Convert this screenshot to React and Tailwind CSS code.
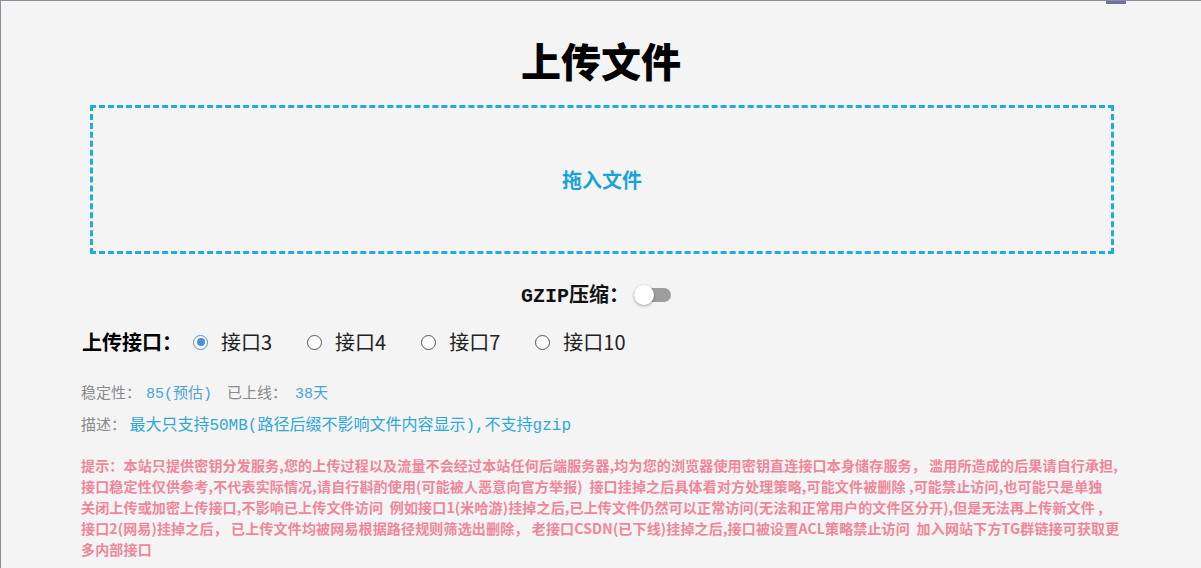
import { useState } from "react";

const cjk = '"Noto Sans CJK SC", "Noto Sans", sans-serif';
const mono = '"Liberation Mono", "Noto Sans CJK SC", monospace';

const apis = ["接口3", "接口4", "接口7", "接口10"];

const notice = [
    "提示：本站只提供密钥分发服务,您的上传过程以及流量不会经过本站任何后端服务器,均为您的浏览器使用密钥直连接口本身储存服务， 滥用所造成的后果请自行承担,",
    "接口稳定性仅供参考,不代表实际情况,请自行斟酌使用(可能被人恶意向官方举报)  接口挂掉之后具体看对方处理策略,可能文件被删除 ,可能禁止访问,也可能只是单独",
    "关闭上传或加密上传接口,不影响已上传文件访问  例如接口1(米哈游)挂掉之后,已上传文件仍然可以正常访问(无法和正常用户的文件区分开),但是无法再上传新文件 ,",
    "接口2(网易)挂掉之后， 已上传文件均被网易根据路径规则筛选出删除， 老接口CSDN(已下线)挂掉之后,接口被设置ACL策略禁止访问  加入网站下方TG群链接可获取更",
    "多内部接口",
];

function Radio({ label, checked, onClick }) {
    return (
        <button onClick={onClick} className="flex items-center gap-[13px]">
            <span
                className={
                    "w-[15px] h-[15px] rounded-full border-[1.5px] flex items-center justify-center bg-white " +
                    (checked ? "border-[#4a90d9]" : "border-[#555]")
                }
            >
                {checked && <span className="w-[8px] h-[8px] rounded-full bg-[#4a90d9]" />}
            </span>
            <span className="text-[20px] text-[#222]">{label}</span>
        </button>
    );
}

export default function App() {
    const [api, setApi] = useState(0);
    const [gzip, setGzip] = useState(false);

    return (
        <div
            className="relative min-h-[568px] bg-[#f4f4f4] border-t border-l border-[#8a8f99] px-[80px] pt-[35px]"
            style={{ fontFamily: cjk }}
        >
            <div className="absolute top-0 left-[1105px] w-[20px] h-[3px] bg-[#6f6fa0]" />

            <h1 className="text-center text-[40px] leading-[48px] font-black text-black">
                上传文件
            </h1>

            <div className="mt-[21px] ml-[9px] mr-[7px] h-[149px] border-[3px] border-dashed border-[#1fadd9] flex items-center justify-center">
                <span className="text-[20px] font-bold text-[#1aa3d6]">拖入文件</span>
            </div>

            <div className="mt-[29px] h-[24px] flex items-center justify-center gap-[5px] pr-[10px]">
                <span className="text-[20px] font-bold text-[#111]">
                    <span style={{ fontFamily: mono }}>GZIP</span>压缩：
                </span>
                <button
                    onClick={() => setGzip(!gzip)}
                    className="relative w-[37px] h-[14px] rounded-full bg-[#9e9e9e]"
                >
                    <span
                        className={
                            "absolute top-[-3px] w-[20px] h-[20px] rounded-full bg-white shadow-[0_1px_3px_rgba(0,0,0,0.35)] " +
                            (gzip ? "left-[17px]" : "left-0")
                        }
                    />
                </button>
            </div>

            <div className="mt-[21px] h-[28px] flex items-center">
                <span className="text-[20px] font-bold text-black mr-[11px] ml-[1px]">上传接口：</span>
                <div className="flex items-center gap-[35px]">
                    {apis.map((a, i) => (
                        <Radio key={a} label={a} checked={api === i} onClick={() => setApi(i)} />
                    ))}
                </div>
            </div>

            <div className="mt-[26px] h-[20px] flex items-baseline text-[15px] leading-[20px] text-[#8a8a8a]">
                <span>稳定性：</span>
                <span className="ml-[5px] text-[#4aa3d8]" style={{ fontFamily: mono }}>85(预估)</span>
                <span className="ml-[15px]">已上线：</span>
                <span className="ml-[8px] text-[#4aa3d8]" style={{ fontFamily: mono }}>38天</span>
            </div>
            <div className="mt-[12px] text-[15px] leading-[20px] text-[#8a8a8a]">
                描述：{" "}
                <span className="text-[16px] text-[#2ea8d6]" style={{ fontFamily: mono }}>
                    最大只支持50MB(路径后缀不影响文件内容显示),不支持gzip
                </span>
            </div>

            <div className="mt-[19px] text-[14px] leading-[21px] font-bold tracking-[0.16px] text-[#f0869a]">
                {notice.map((line, i) => (
                    <div key={i} className="whitespace-pre">
                        {line}
                    </div>
                ))}
            </div>
        </div>
    );
}
